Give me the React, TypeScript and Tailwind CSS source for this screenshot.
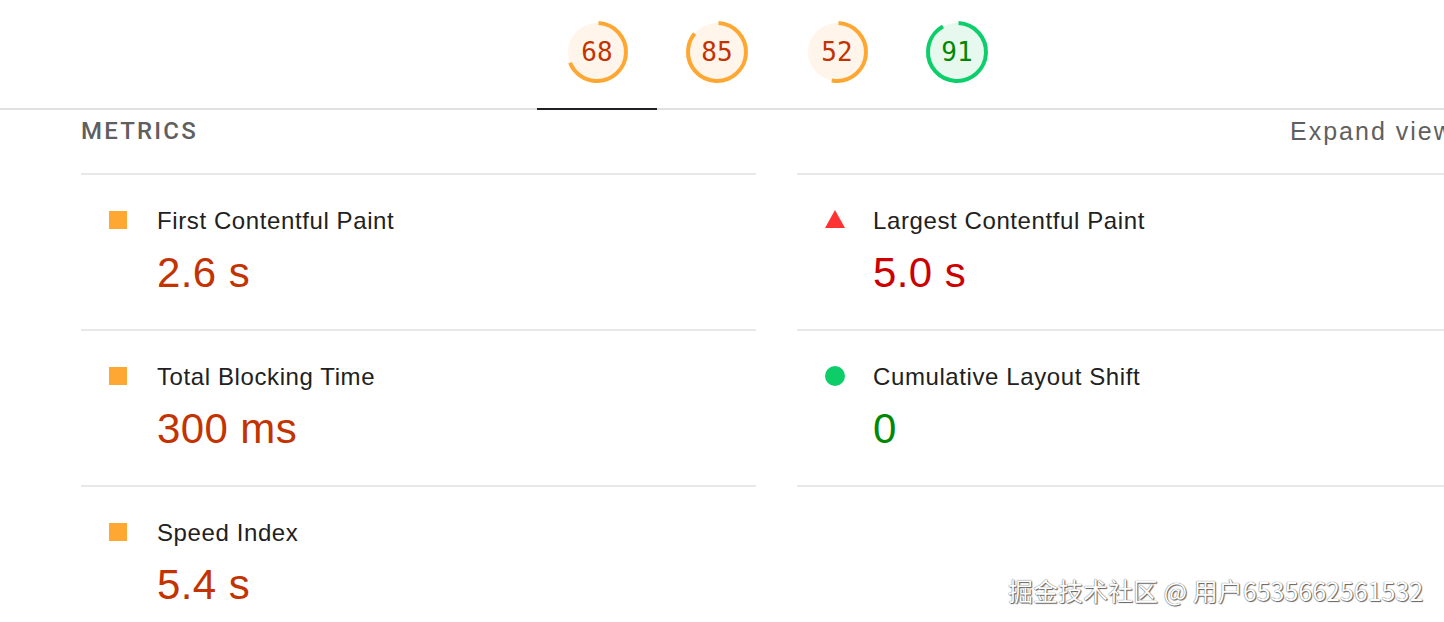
import React from "react";

type GaugeProps = { value: number; pass?: boolean; active?: boolean };

function Gauge({ value, pass, active }: GaugeProps) {
  const r = 29;
  const c = 2 * Math.PI * r;
  const stroke = pass ? "#0cce6b" : "#ffa733";
  const fill = pass ? "#e7f8ee" : "#fff5eb";
  return (
    <div
      className={
        "w-[120px] h-[110px] flex justify-center pt-[20px] " +
        (active ? "border-b-2 border-[#202124]" : "")
      }
    >
      <div className="relative w-[64px] h-[64px]">
        <svg width="64" height="64" viewBox="0 0 64 64" className="block">
          <circle cx="32" cy="32" r={r} fill={fill} />
          <circle
            cx="32"
            cy="32"
            r={r}
            fill="none"
            stroke={stroke}
            strokeWidth="4"
            strokeDasharray={`${(c * value) / 100} ${c}`}
            transform="rotate(-87 32 32)"
          />
        </svg>
        <div
          className={
            "absolute inset-0 flex items-center justify-center text-[26px] leading-none font-['DejaVu_Sans_Mono',monospace] " +
            (pass ? "text-[#008800]" : "text-[#c33300]")
          }
        >
          {value}
        </div>
      </div>
    </div>
  );
}

type Metric = {
  label: string;
  value: string;
  kind: "avg" | "fail" | "pass";
};

function Icon({ kind }: { kind: Metric["kind"] }) {
  if (kind === "avg") return <div className="w-[18px] h-[18px] bg-[#ffa733] mt-[-3px]" />;
  if (kind === "pass") return <div className="w-[20px] h-[20px] rounded-full bg-[#0ccd67] mt-[-3px]" />;
  return (
    <svg width="20" height="18" viewBox="0 0 20 18" className="block mt-[-4px]">
      <polygon points="10,0 20,18 0,18" fill="#ff3333" />
    </svg>
  );
}

function MetricCell({ m }: { m?: Metric }) {
  return (
    <div className="h-[156px] border-t-2 border-[#e8e8e8]">
      {m && (
        <div className="pt-[32px]">
          <div className="flex items-center h-[28px]">
            <div className="w-[76px] pl-[28px] flex items-center">
              <Icon kind={m.kind} />
            </div>
            <div className="text-[24px] tracking-[0.6px] text-[#212121] leading-[28px] font-['Liberation_Sans',Arial,sans-serif]">
              {m.label}
            </div>
          </div>
          <div
            className={
              "pl-[76px] mt-[14px] text-[42px] tracking-[0.4px] leading-[48px] font-['Liberation_Sans',Arial,sans-serif] " +
              (m.kind === "avg"
                ? "text-[#c33300]"
                : m.kind === "fail"
                ? "text-[#cc0000]"
                : "text-[#008800]")
            }
          >
            {m.value}
          </div>
        </div>
      )}
    </div>
  );
}

export default function App() {
  const metrics: (Metric | undefined)[] = [
    { label: "First Contentful Paint", value: "2.6 s", kind: "avg" },
    { label: "Largest Contentful Paint", value: "5.0 s", kind: "fail" },
    { label: "Total Blocking Time", value: "300 ms", kind: "avg" },
    { label: "Cumulative Layout Shift", value: "0", kind: "pass" },
    { label: "Speed Index", value: "5.4 s", kind: "avg" },
    undefined,
  ];
  return (
    <div className="relative w-[1444px] h-[622px] overflow-hidden bg-white">
      <div className="flex h-[110px] border-b-2 border-[#e0e0e0] pl-[537px]">
        <Gauge value={68} active />
        <Gauge value={85} />
        <Gauge value={52} />
        <Gauge value={91} pass />
      </div>
      <div className="pl-[81px]">
        <div className="flex h-[63px] pt-[8px] items-start">
          <div className="w-[1209px] shrink-0 text-[24px] leading-[26px] tracking-[2.2px] font-medium text-[#5f5f5f] font-['Roboto',Arial,sans-serif]">
            METRICS
          </div>
          <div className="shrink-0 whitespace-nowrap text-[25px] leading-[26px] tracking-[2px] text-[#5f5f5f] font-['Liberation_Sans',Arial,sans-serif]">
            Expand view
          </div>
        </div>
        <div className="grid grid-cols-[675px_675px] gap-x-[41px]">
          {metrics.map((m, i) => (
            <MetricCell key={i} m={m} />
          ))}
        </div>
      </div>
      <div className="absolute left-[1008px] top-[574px] whitespace-nowrap text-[25px] leading-[32px] text-white font-['Noto_Sans_CJK_SC','Noto_Sans',sans-serif] [text-shadow:0_0_1px_#333,1px_1px_1px_#666]">
        掘金技术社区 @ 用户6535662561532
      </div>
    </div>
  );
}
